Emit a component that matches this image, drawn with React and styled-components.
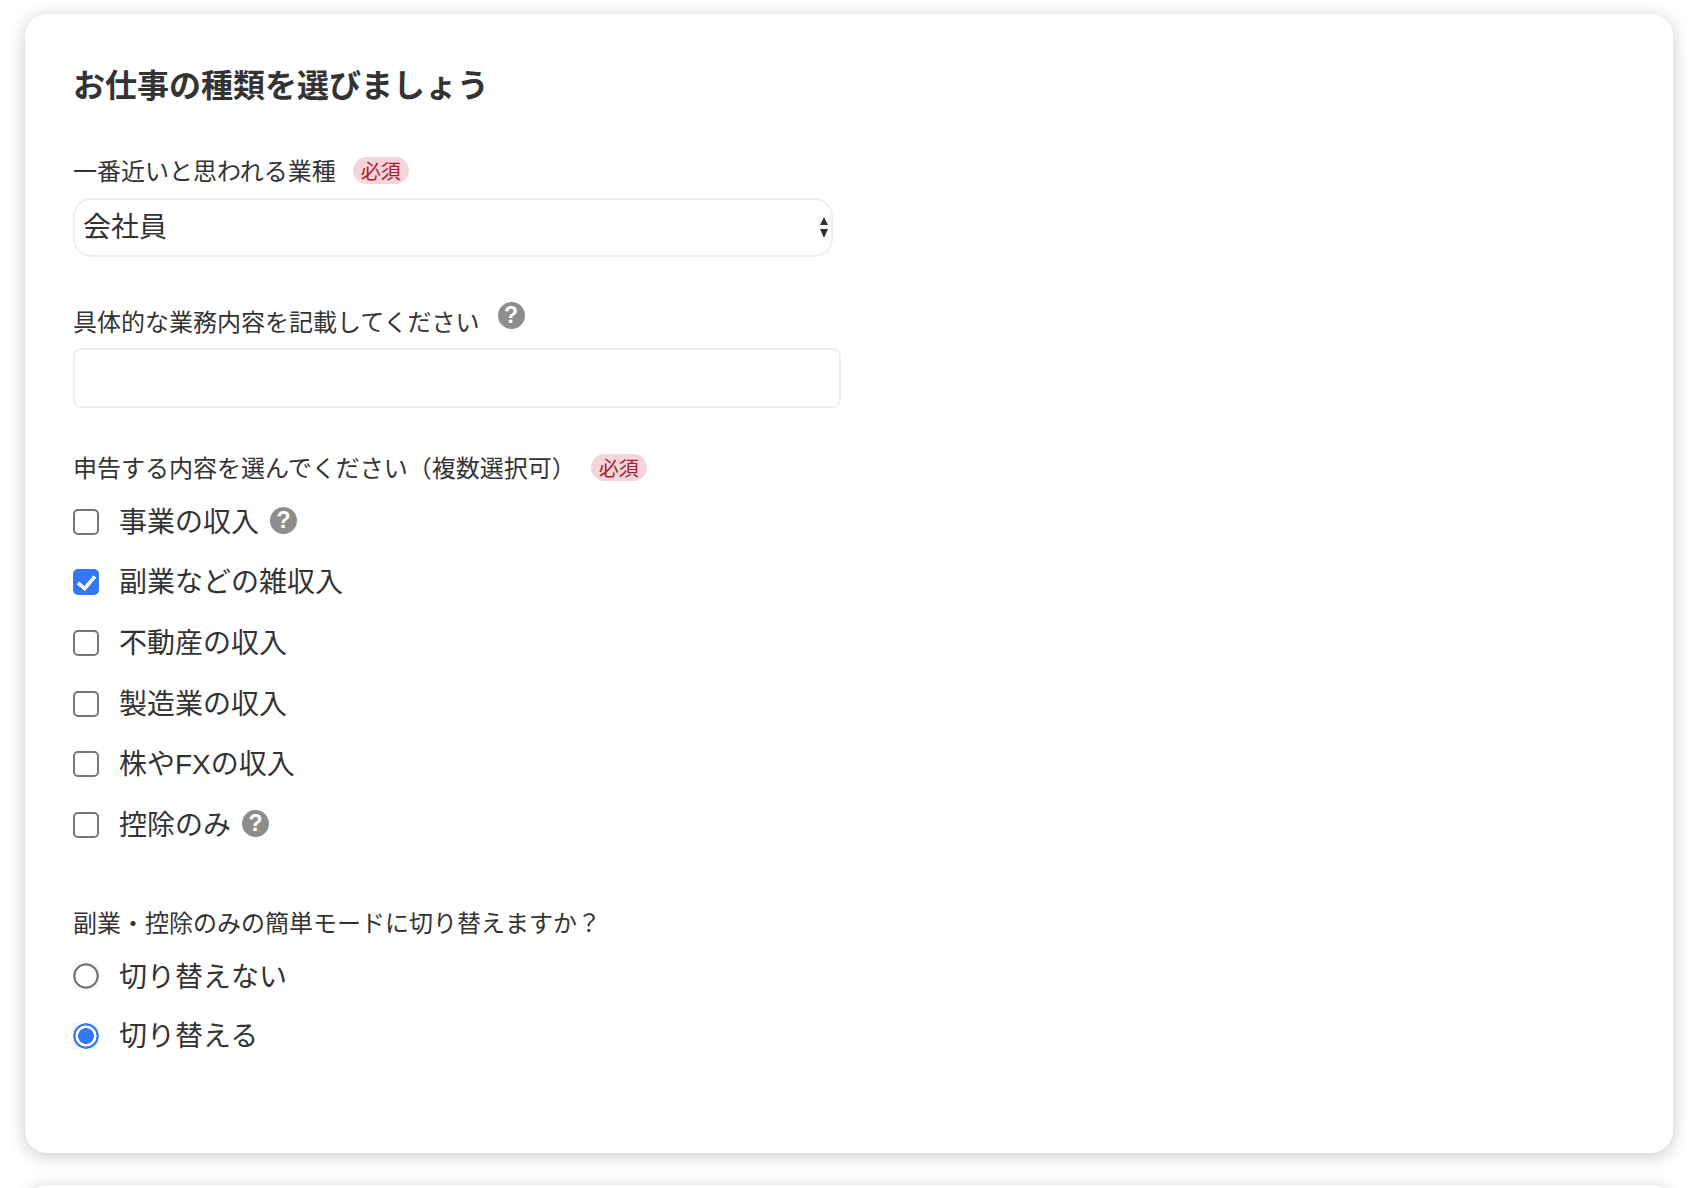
import styled, { createGlobalStyle } from "styled-components";

const GlobalStyle = createGlobalStyle`
    html, body {
        margin: 0;
        background: #fff;
    }
    body {
        height: 1188px;
        overflow: hidden;
        font-family: "Liberation Sans", "Noto Sans CJK JP", sans-serif;
        color: #333;
    }
`;

const Page = styled.div`
    height: 1188px;
    overflow: hidden;
    padding: 14px 25px 0;
    box-sizing: border-box;
`;

const Card = styled.section`
    box-sizing: border-box;
    height: ${(p) => p.$height}px;
    margin-bottom: 32px;
    padding: 50px 48px 0;
    background: #fff;
    border-radius: 22px;
    box-shadow: 0 3px 18px rgba(0, 0, 0, 0.22);
`;

const Title = styled.h2`
    margin: 0;
    font-size: 32px;
    line-height: 44px;
    font-weight: 700;
    color: #333;
`;

const Field = styled.div`
    margin-top: ${(p) => p.$top}px;
`;

const Label = styled.label`
    display: flex;
    align-items: center;
    box-sizing: border-box;
    height: 34px;
    padding-bottom: 3px;
    font-size: 24px;
    font-weight: 400;
    color: #333;
`;

const Required = styled.span`
    display: inline-flex;
    align-items: center;
    justify-content: center;
    box-sizing: border-box;
    width: 56px;
    height: 27px;
    margin: 1px 0 0 ${(p) => p.$left || 17}px;
    border-radius: 14px;
    background: #f4d5d9;
    color: #a61e2e;
    font-size: 20px;
`;

const Help = styled.span`
    display: inline-flex;
    align-items: center;
    justify-content: center;
    flex: none;
    width: 27px;
    height: 27px;
    margin-left: ${(p) => p.$left}px;
    border-radius: 50%;
    background: #8d8d8d;
    color: #fff;
    font-size: 23px;
    font-weight: 700;
    line-height: 1;
    transform: translateY(${(p) => p.$shift || 0}px);
`;

const SelectWrap = styled.div`
    position: relative;
    width: 760px;
    margin-top: 10px;
`;

const Select = styled.select`
    display: block;
    box-sizing: border-box;
    width: 100%;
    height: 59px;
    padding: 0 8px;
    appearance: none;
    background: #fff;
    border: 2px solid #efefef;
    border-radius: 18px;
    font-family: inherit;
    font-size: 28px;
    color: #333;
    outline: none;
`;

const Arrows = styled.svg`
    position: absolute;
    top: 19px;
    right: 4px;
    width: 10px;
    height: 21px;
    pointer-events: none;
`;

const TextInput = styled.input`
    display: block;
    box-sizing: border-box;
    width: 768px;
    height: 60px;
    margin-top: 9px;
    padding: 0 8px;
    background: #fff;
    border: 2px solid #efefef;
    border-radius: 8px;
    font-family: inherit;
    font-size: 28px;
    outline: none;
`;

const Options = styled.div`
    margin-top: ${(p) => p.$top}px;
`;

const Option = styled.label`
    display: flex;
    align-items: center;
    height: ${(p) => p.$height}px;
    font-size: 28px;
    color: #333;
`;

const OptionText = styled.span`
    margin: -3px 0 0 20px;
`;

const Check = styled.input`
    position: relative;
    flex: none;
    box-sizing: border-box;
    width: 26px;
    height: 26px;
    margin: 1px 0 0;
    appearance: none;
    background: #fff;
    border: 2px solid #767676;
    border-radius: 5px;

    &:checked {
        background: #3478f6;
        border-color: #3478f6;
    }
    &:checked::after {
        content: "";
        position: absolute;
        left: 6px;
        top: 1px;
        width: 7px;
        height: 14px;
        border: solid #fff;
        border-width: 0 4px 4px 0;
        border-radius: 1px;
        transform: rotate(40deg);
    }
`;

const Radio = styled.input`
    flex: none;
    width: 26px;
    height: 26px;
    margin: 0;
    appearance: none;
    background: radial-gradient(circle at center, #fff 0 10.2px, #777 10.8px 12.4px, #f6f6f6 13px);

    &:checked {
        background: radial-gradient(
            circle at center,
            #3478f6 0 7.6px,
            #fff 8.2px 10.2px,
            #3478f6 10.8px 12.4px,
            #f6f6f6 13px
        );
    }
`;

const incomes = [
    { label: "事業の収入", help: true },
    { label: "副業などの雑収入", checked: true },
    { label: "不動産の収入" },
    { label: "製造業の収入" },
    { label: "株やFXの収入" },
    { label: "控除のみ", help: true },
];

const App = () => {
    return (
        <>
            <GlobalStyle />
            <Page>
                <Card $height={1139}>
                    <Title>お仕事の種類を選びましょう</Title>

                    <Field $top={46}>
                        <Label>
                            一番近いと思われる業種
                            <Required>必須</Required>
                        </Label>
                        <SelectWrap>
                            <Select defaultValue="会社員">
                                <option>会社員</option>
                                <option>自営業</option>
                            </Select>
                            <Arrows viewBox="0 0 10 21">
                                <path d="M5 0 L9 8 H1 Z M1 12 H9 L5 21 Z" fill="#333" />
                            </Arrows>
                        </SelectWrap>
                    </Field>

                    <Field $top={48}>
                        <Label>
                            具体的な業務内容を記載してください
                            <Help $left={18} $shift={-5}>?</Help>
                        </Label>
                        <TextInput type="text" />
                    </Field>

                    <Field $top={43}>
                        <Label>
                            申告する内容を選んでください（複数選択可）
                            <Required $left={15}>必須</Required>
                        </Label>
                        <Options $top={6}>
                            {incomes.map((item) => (
                                <Option key={item.label} $height={60.6}>
                                    <Check type="checkbox" defaultChecked={item.checked} />
                                    <OptionText>{item.label}</OptionText>
                                    {item.help && <Help $left={11} $shift={-1}>?</Help>}
                                </Option>
                            ))}
                        </Options>
                    </Field>

                    <Field $top={51}>
                        <Label>副業・控除のみの簡単モードに切り替えますか？</Label>
                        <Options $top={7}>
                            <Option $height={59.5}>
                                <Radio type="radio" name="mode" />
                                <OptionText>切り替えない</OptionText>
                            </Option>
                            <Option $height={59.5}>
                                <Radio type="radio" name="mode" defaultChecked />
                                <OptionText>切り替える</OptionText>
                            </Option>
                        </Options>
                    </Field>
                </Card>
                <Card $height={200} />
            </Page>
        </>
    );
};

export default App;
